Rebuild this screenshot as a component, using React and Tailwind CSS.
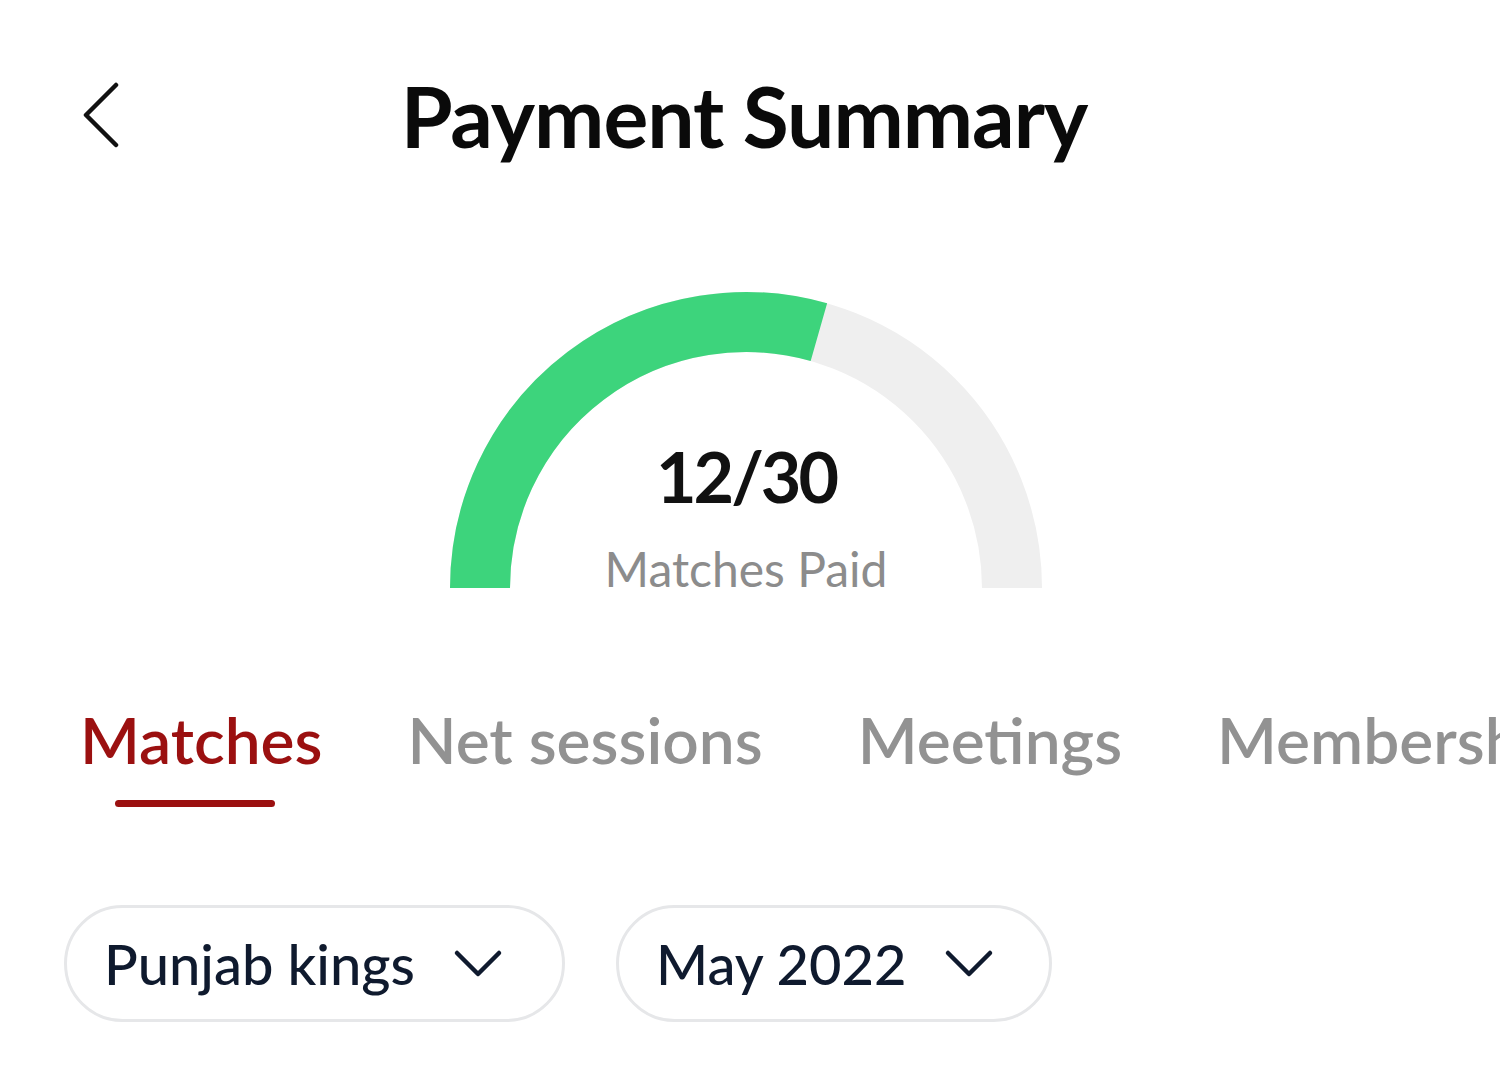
import React from "react";

const font = { fontFamily: "Lato, 'Noto Sans', sans-serif" };

function BackIcon() {
  return (
    <svg width="40" height="70" viewBox="0 0 40 70" fill="none">
      <path d="M33 4 L3 34 L33 64" stroke="#111" strokeWidth="4.5" strokeLinecap="round" strokeLinejoin="round" />
    </svg>
  );
}

function Chevron() {
  return (
    <svg width="50" height="30" viewBox="0 0 50 30" fill="none">
      <path d="M4 4 L25 25 L46 4" stroke="#0f1a2e" strokeWidth="4.5" strokeLinecap="round" strokeLinejoin="round" />
    </svg>
  );
}

function Gauge() {
  return (
    <div className="grid">
      <svg className="col-start-1 row-start-1" width="596" height="298" viewBox="0 0 596 298">
        <path d="M 32 298 A 266 266 0 0 1 564 298" stroke="#efefef" strokeWidth="60" fill="none" />
        <path d="M 32 298 A 266 266 0 0 1 370.9 42.2" stroke="#3dd47c" strokeWidth="60" fill="none" />
      </svg>
      <div className="col-start-1 row-start-1 self-end flex flex-col items-center">
        <div className="text-[70px] font-bold leading-none text-[#111] tracking-[-3px]">12/30</div>
        <div className="mt-[34px] text-[48px] leading-none text-[#8c8c8c] -mb-[5px]">Matches Paid</div>
      </div>
    </div>
  );
}

export default function App() {
  return (
    <div className="w-[1500px] h-[1084px] bg-white overflow-hidden" style={font}>
      <div className="grid grid-cols-[1fr_auto_1fr] items-center pt-[74px] pl-[83px] pr-[95px]">
        <div className="flex items-center"><BackIcon /></div>
        <h1 className="text-[84px] font-bold leading-none text-[#0a0a0a] tracking-[-1px]">Payment Summary</h1>
        <div />
      </div>

      <div className="flex justify-center mt-[132px] pr-[8px]">
        <Gauge />
      </div>

      <div className="flex items-start mt-[120px] pl-[80px] whitespace-nowrap text-[64px] leading-none">
        <div className="flex flex-col items-start">
          <span className="text-[#9b1010] font-semibold">Matches</span>
          <div className="mt-[28px] ml-[35px] h-[7px] w-[160px] rounded-full bg-[#9b1010]" />
        </div>
        <span className="ml-[85px] text-[#929292] font-semibold">Net sessions</span>
        <span className="ml-[95px] text-[#929292] font-semibold">Meetings</span>
        <span className="ml-[95px] text-[#929292] font-semibold">Memberships</span>
      </div>

      <div className="flex gap-[51px] mt-[98px] pl-[64px]">
        <div className="h-[117px] w-[501px] rounded-full border-[3px] border-[#e6e7e9] flex items-center pl-[37px] gap-[38px]">
          <span className="text-[56px] text-[#0f1a2e] leading-none font-medium">Punjab kings</span>
          <Chevron />
        </div>
        <div className="h-[117px] w-[436px] rounded-full border-[3px] border-[#e6e7e9] flex items-center pl-[37px] gap-[38px]">
          <span className="text-[56px] text-[#0f1a2e] leading-none font-medium">May 2022</span>
          <Chevron />
        </div>
      </div>
    </div>
  );
}
